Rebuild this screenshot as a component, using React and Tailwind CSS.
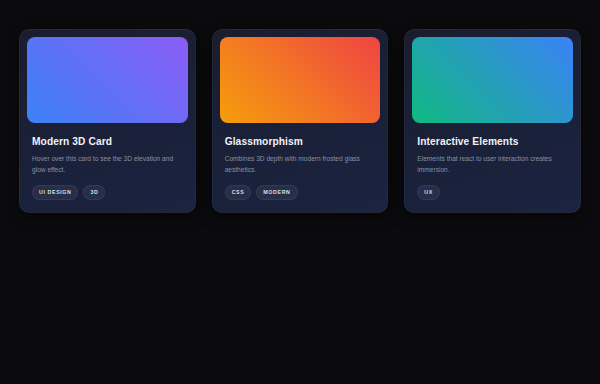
import React from 'react'

const cards = [
  {
    title: 'Modern 3D Card',
    desc: 'Hover over this card to see the 3D elevation and glow effect.',
    tags: ['UI DESIGN', '3D'],
    grad: 'bg-[linear-gradient(45deg,#3b82f6,#8b5cf6)]',
  },
  {
    title: 'Glassmorphism',
    desc: 'Combines 3D depth with modern frosted glass aesthetics.',
    tags: ['CSS', 'MODERN'],
    grad: 'bg-[linear-gradient(45deg,#f59e0b,#ef4444)]',
  },
  {
    title: 'Interactive Elements',
    desc: 'Elements that react to user interaction creates immersion.',
    tags: ['UX'],
    grad: 'bg-[linear-gradient(45deg,#10b981,#3b82f6)]',
  },
]

function Card({ card }) {
  return (
    <div className="rounded-[10px] p-[7px] bg-[linear-gradient(160deg,#1a1d2e,#1a2341)] border border-white/[0.035] shadow-[0_4px_14px_rgba(0,0,0,0.5)]">
      <div className={`h-[86px] rounded-[8px] ${card.grad}`}></div>
      <div className="px-[5px] pt-[12px] pb-[5px]">
        <h3 className="text-[10.2px] leading-[14px] font-bold text-[#f1f2f6] tracking-[0.1px]">{card.title}</h3>
        <p className="mt-[5px] text-[6.6px] leading-[10.7px] text-[#8a90a3]">{card.desc}</p>
        <div className="mt-[10px] flex gap-[5px]">
          {card.tags.map((t) => (
            <span
              key={t}
              className="h-[15px] px-[6px] flex items-center rounded-full bg-white/[0.06] border border-white/[0.06] text-[5.3px] font-bold tracking-[0.6px] text-[#dcdfe8]"
            >
              {t}
            </span>
          ))}
        </div>
      </div>
    </div>
  )
}

export default function App() {
  return (
    <div className="min-h-[384px] w-full bg-[#0b0b0d] px-[19px] pt-[29px]" style={{ fontFamily: '"Liberation Sans", Arial, sans-serif' }}>
      <div className="grid grid-cols-3 gap-4 items-start">
        {cards.map((c) => (
          <Card key={c.title} card={c} />
        ))}
      </div>
    </div>
  )
}
